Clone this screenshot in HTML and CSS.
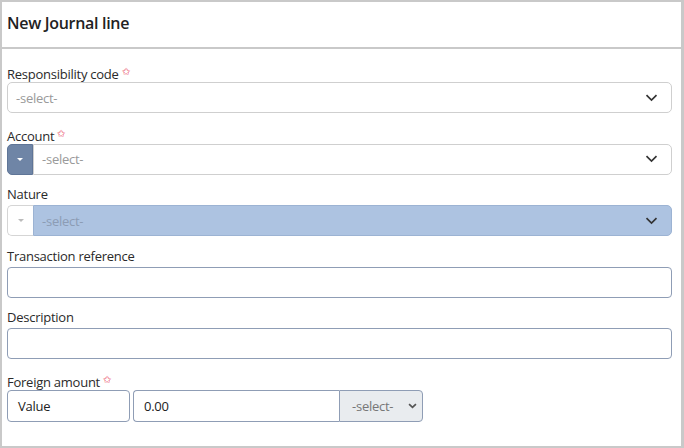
FILE: index.html
```html
<!DOCTYPE html>
<html>
<head>
<meta charset="utf-8">
<link rel="stylesheet" href="styles.css">
</head>
<body>
<div class="panel">
  <div class="header">New Journal line</div>
  <div class="body">
    <div class="field">
      <label class="lbl">Responsibility code <span class="req">✩</span></label>
      <div class="select">
        <span class="ph">-select-</span>
        <svg class="chev" viewBox="0 0 12 8" width="13" height="8"><path d="M1 1.2 L6 6 L11 1.2" fill="none" stroke="#333" stroke-width="1.7"/></svg>
      </div>
    </div>
    <div class="field">
      <label class="lbl">Account <span class="req">✩</span></label>
      <div class="group">
        <div class="btn dark"><span class="tri light"></span></div>
        <div class="select grow joined">
          <span class="ph">-select-</span>
          <svg class="chev" viewBox="0 0 12 8" width="13" height="8"><path d="M1 1.2 L6 6 L11 1.2" fill="none" stroke="#333" stroke-width="1.7"/></svg>
        </div>
      </div>
    </div>
    <div class="field">
      <label class="lbl">Nature</label>
      <div class="group">
        <div class="btn plain"><span class="tri gray"></span></div>
        <div class="select grow joined disabled">
          <span class="ph">-select-</span>
          <svg class="chev" viewBox="0 0 12 8" width="13" height="8"><path d="M1 1.2 L6 6 L11 1.2" fill="none" stroke="#333" stroke-width="1.7"/></svg>
        </div>
      </div>
    </div>
    <div class="field">
      <label class="lbl">Transaction reference</label>
      <div class="input"></div>
    </div>
    <div class="field">
      <label class="lbl">Description</label>
      <div class="input"></div>
    </div>
    <div class="field">
      <label class="lbl">Foreign amount <span class="req">✩</span></label>
      <div class="amount">
        <div class="box value">Value</div>
        <div class="box num">0.00</div>
        <div class="box cur">
          <span class="curtxt">-select-</span>
          <svg viewBox="0 0 10 7" width="9" height="6"><path d="M1 1.2 L5 5 L9 1.2" fill="none" stroke="#555" stroke-width="2"/></svg>
        </div>
      </div>
    </div>
  </div>
</div>
</body>
</html>
```
FILE: styles.css
```css
* { box-sizing: border-box; }
html, body { margin: 0; padding: 0; background: #fff; }
body {
  font-family: "Open Sans", "Noto Sans", sans-serif;
  color: #333;
  width: 684px;
  height: 448px;
}
.panel {
  width: 684px;
  height: 448px;
  border: 2px solid #c9c9c9;
  border-right-width: 3px;
}
.header {
  height: 47px;
  border-bottom: 2px solid #c9c9c9;
  padding: 10px 0 0 5px;
  font-size: 16px;
  font-weight: 600;
  color: #222;
  letter-spacing: -0.3px;
}
.body {
  padding: 14px 9px 0 5px;
  display: flex;
  flex-direction: column;
  gap: 11.6px;
}
.field { display: flex; flex-direction: column; }
.lbl {
  font-size: 13px;
  line-height: 17px;
  height: 19px;
  color: #2a2a2a;
  letter-spacing: -0.25px;
}
.req { color: #e8405a; font-size: 10px; vertical-align: 4px; }
.select {
  height: 31px;
  border: 1px solid #cfcfcf;
  border-radius: 5px;
  display: flex;
  align-items: center;
  justify-content: space-between;
  padding: 0 13px 0 8px;
  background: #fff;
}
.ph { font-size: 13px; color: #9a9a9a; letter-spacing: -0.25px; }
.group { display: flex; height: 31px; }
.grow { flex: 1; }
.joined { border-top-left-radius: 0; border-bottom-left-radius: 0; }
.btn {
  width: 26px;
  height: 31px;
  border-radius: 5px 0 0 5px;
  display: flex;
  align-items: center;
  justify-content: center;
}
.btn.dark { background: #6f85a6; border: 1px solid #5f7597; }
.btn.plain { background: #fff; border: 1px solid #d5d5d5; border-right: none; }
.tri { width: 0; height: 0; border-left: 3px solid transparent; border-right: 3px solid transparent; border-top: 3px solid; }
.tri.light { border-top-color: #fff; }
.tri.gray { border-top-color: #bbb; }
.disabled { background: #adc3e1; border-color: #9cb3d3; }
.disabled .ph { color: #8c9cb4; }
.input {
  height: 31px;
  border: 1px solid #8f9db5;
  border-radius: 4px;
}
.amount { display: flex; height: 32px; }
.box {
  height: 32px;
  border: 1px solid #8f9db5;
  display: flex;
  align-items: center;
  font-size: 13px;
  color: #222;
  letter-spacing: -0.25px;
}
.value { width: 123px; border-radius: 4px; padding-left: 10px; margin-right: 3px; }
.num { width: 206px; border-radius: 4px 0 0 4px; padding-left: 10px; border-right: none; }
.cur {
  width: 84px;
  border-radius: 0 4px 4px 0;
  background: #e9ecef;
  justify-content: space-between;
  padding: 0 5px 0 12px;
}
.curtxt { color: #777; }
```
